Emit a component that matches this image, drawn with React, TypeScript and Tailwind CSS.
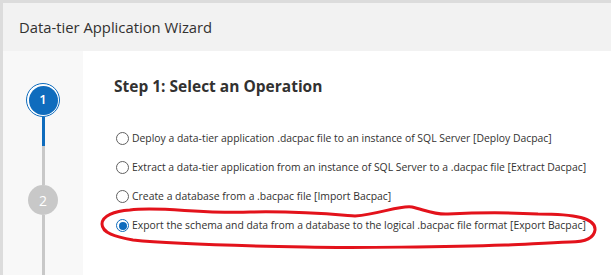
const options = [
  "Deploy a data-tier application .dacpac file to an instance of SQL Server [Deploy Dacpac]",
  "Extract a data-tier application from an instance of SQL Server to a .dacpac file [Extract Dacpac]",
  "Create a database from a .bacpac file [Import Bacpac]",
  "Export the schema and data from a database to the logical .bacpac file format [Export Bacpac]",
];

function Radio({ checked }: { checked: boolean }) {
  if (checked) {
    return (
      <span className="flex items-center justify-center w-[13px] h-[13px] rounded-full border border-[#0f6cbd] bg-white shrink-0">
        <span className="w-[8px] h-[8px] rounded-full bg-[#0f6cbd]" />
      </span>
    );
  }
  return <span className="w-[13px] h-[13px] rounded-full border border-[#616161] bg-white shrink-0" />;
}

export default function App() {
  return (
    <div className="relative w-[611px] h-[275px] bg-[#dcdcdc] pt-[3px] pl-[3px] overflow-hidden font-['Open_Sans',sans-serif]">
      <div className="flex flex-col h-full bg-white">
        {/* header */}
        <div className="h-[48px] flex items-center bg-[#f2f2f2] pl-[16px]">
          <h1 className="text-[14.8px] text-[#323130] whitespace-nowrap">Data-tier Application Wizard</h1>
        </div>

        <div className="flex flex-1 min-w-0">
          {/* steps */}
          <div className="w-[80px] shrink-0 bg-[#f8f8f8] flex flex-col items-center pt-[32px]">
            <div className="w-[34px] h-[34px] rounded-full border-[1.5px] border-[#0f6cbd] p-[1.5px] bg-white">
              <div className="w-full h-full rounded-full bg-[#0f6cbd] flex items-center justify-center text-white text-[13px] font-semibold">
                1
              </div>
            </div>
            <div className="w-[3px] h-[29px] bg-[#0f6cbd]" />
            <div className="w-[3px] h-[39px] bg-[#c8c8c8]" />
            <div className="w-[30px] h-[30px] rounded-full bg-[#c8c8c8] flex items-center justify-center text-white text-[14px]">
              2
            </div>
            <div className="w-[3px] flex-1 bg-[#c8c8c8]" />
          </div>

          {/* content */}
          <div className="flex-1 min-w-0 pl-[31px] pt-[24px]">
            <h2 className="text-[15.5px] font-bold text-[#323130] whitespace-nowrap">Step 1: Select an Operation</h2>
            <div className="flex flex-col gap-[12px] mt-[32px] pl-[2px]">
              {options.map((o, i) => (
                <label key={o} className="flex items-center gap-[3px] h-[17px] text-[10.4px] text-[#323130] whitespace-nowrap">
                  <Radio checked={i === 3} />
                  <span>{o}</span>
                </label>
              ))}
            </div>
          </div>
        </div>
      </div>

      {/* red annotation scribble */}
      <svg className="absolute left-0 top-0 pointer-events-none" width="611" height="275">
        <path
          d="M130 210 C160 206 200 214 250 212 C300 211 330 214 355 216 C380 214 400 205 412 207 C425 210 435 215 448 214 C490 212 520 213 538 214 C575 214 596 218 595 230 C594 238 585 242 570 242 C540 243 520 245 505 245 C450 247 350 248 305 247 C250 246 170 244 133 240 C115 237 102 233 102 224 C102 216 114 211 130 210"
          fill="none"
          stroke="#e3121b"
          strokeWidth="3"
          strokeLinecap="round"
          strokeLinejoin="round"
        />
      </svg>
    </div>
  );
}
